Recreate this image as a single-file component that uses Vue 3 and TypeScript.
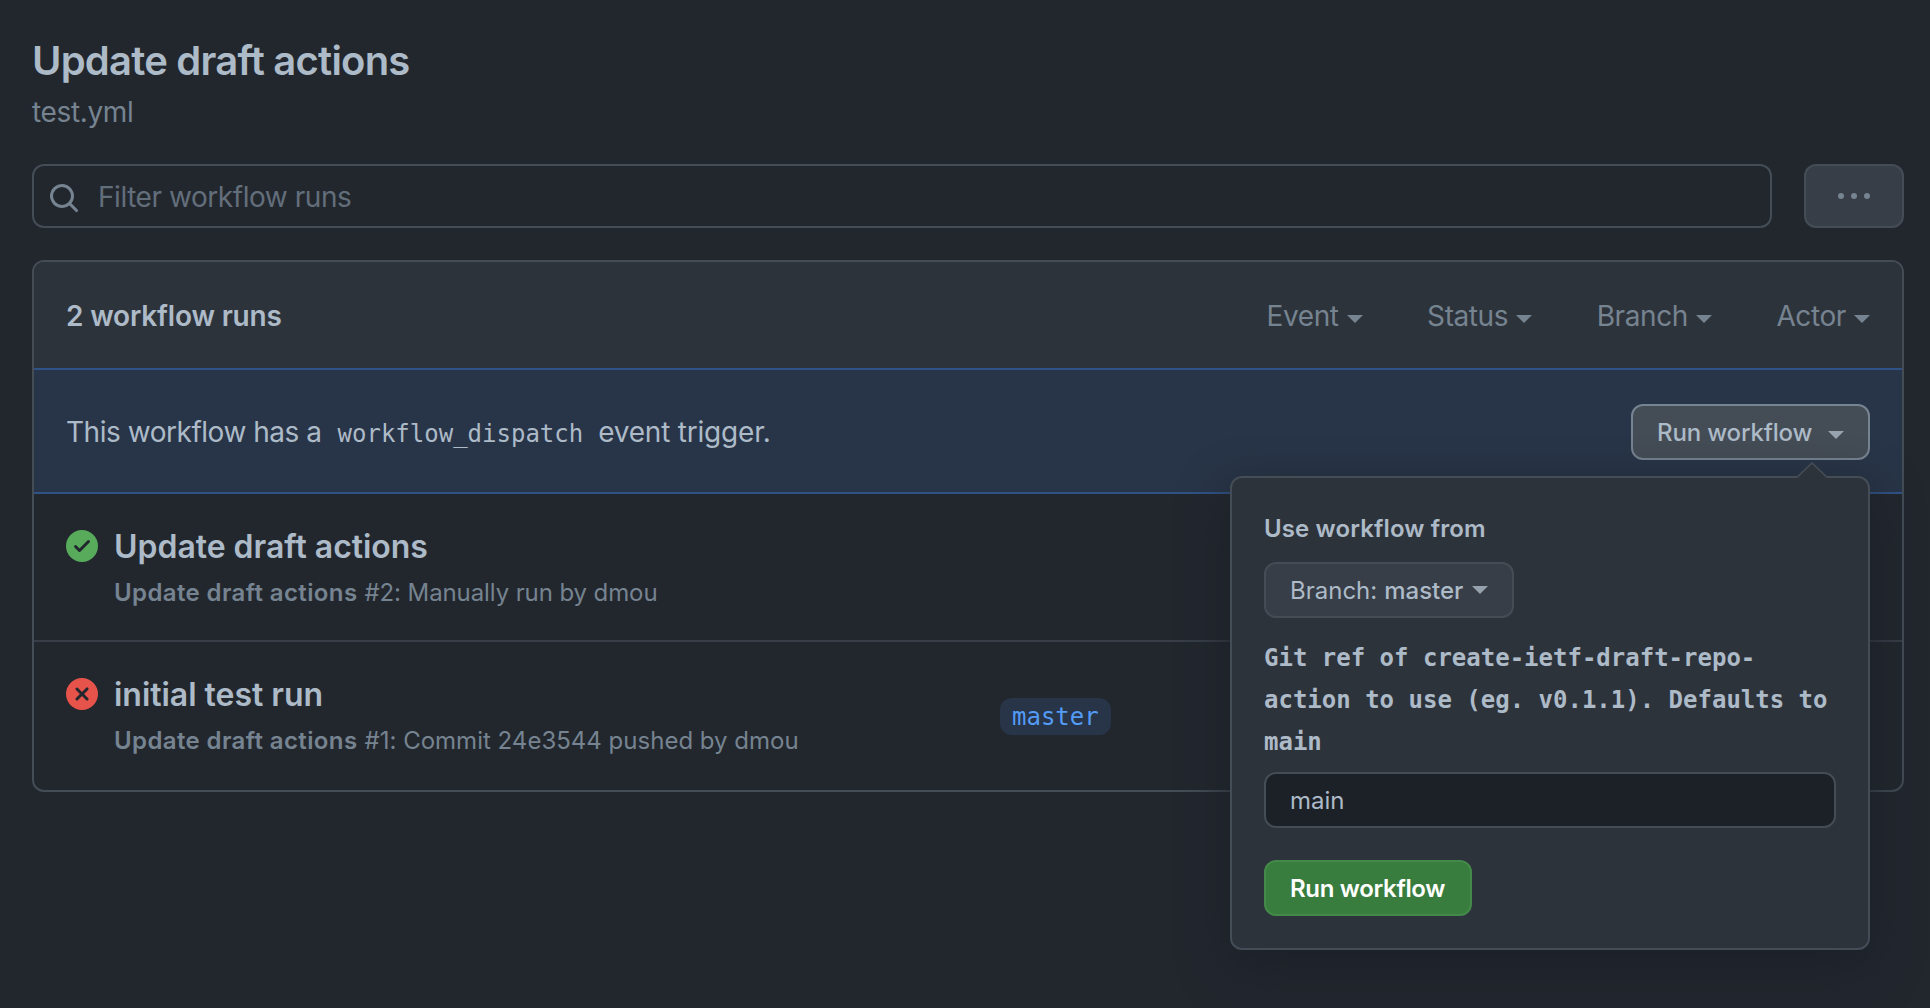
<script setup lang="ts">
import { ref } from 'vue'

interface Run {
  id: number
  ok: boolean
  title: string
  workflow: string
  detail: string
  branch?: string
}

const query = ref('')
const gitRef = ref('main')
const filters: string[] = ['Event', 'Status', 'Branch', 'Actor']
const runs: Run[] = [
  { id: 2, ok: true, title: 'Update draft actions', workflow: 'Update draft actions', detail: '#2: Manually run by dmou' },
  { id: 1, ok: false, title: 'initial test run', workflow: 'Update draft actions', detail: '#1: Commit 24e3544 pushed by dmou', branch: 'master' },
]
</script>

<template>
  <main class="page">
    <h1 class="title">Update draft actions</h1>
    <div class="file">test.yml</div>

    <div class="toolbar">
      <label class="search">
        <svg class="search-icon" viewBox="0 0 16 16" width="32" height="32">
          <path fill-rule="evenodd" d="M11.5 7a4.499 4.499 0 11-8.998 0A4.499 4.499 0 0111.5 7zm-.82 4.74a6 6 0 111.06-1.06l3.04 3.04a.75.75 0 11-1.06 1.06l-3.04-3.04z" />
        </svg>
        <input v-model="query" class="search-input" type="text" placeholder="Filter workflow runs" />
      </label>
      <button class="more" type="button" aria-label="Show options">
        <svg viewBox="0 0 16 16" width="32" height="32">
          <circle cx="1.5" cy="7.5" r="1.5" />
          <circle cx="8" cy="7.5" r="1.5" />
          <circle cx="14.5" cy="7.5" r="1.5" />
        </svg>
      </button>
    </div>

    <section class="box">
      <header class="box-header">
        <strong class="count">2 workflow runs</strong>
        <nav class="filters">
          <span v-for="f in filters" :key="f" class="filter">{{ f }}<i class="caret" /></span>
        </nav>
      </header>

      <div class="banner">
        <p class="banner-text">
          <span class="lead">This workflow has a</span>
          <code class="event">workflow_dispatch</code>
          <span class="trail">event trigger.</span>
        </p>
        <div class="dispatch">
          <button class="btn btn-open" type="button">Run workflow<i class="caret" /></button>
          <div class="popover">
            <svg class="notch" width="32" height="16" viewBox="0 0 32 16">
              <path class="notch-fill" d="M1 16L2 15L16 1L30 15L31 16Z" />
              <path class="notch-line" d="M1.5 14.8L16 1L30.5 14.8" />
            </svg>
            <div class="pop-title">Use workflow from</div>
            <button class="btn btn-branch" type="button">
              <span>Branch:</span><span class="branch-name">master</span><i class="caret" />
            </button>
            <label class="ref-label" for="git-ref">Git ref of create-ietf-draft-repo-action to use (eg. v0.1.1). Defaults to main</label>
            <input id="git-ref" v-model="gitRef" class="ref-input" type="text" />
            <button class="btn btn-primary" type="button">Run workflow</button>
          </div>
        </div>
      </div>

      <article v-for="run in runs" :key="run.id" class="row">
        <div class="row-main">
          <svg v-if="run.ok" class="state ok" viewBox="0 0 16 16" width="32" height="32">
            <path fill-rule="evenodd" d="M8 16A8 8 0 108 0a8 8 0 000 16zm3.78-9.72a.75.75 0 00-1.06-1.06L6.75 9.19 5.28 7.72a.75.75 0 00-1.06 1.06l2 2a.75.75 0 001.06 0l4.5-4.5z" />
          </svg>
          <svg v-else class="state failed" viewBox="0 0 16 16" width="32" height="32">
            <path fill-rule="evenodd" d="M2.343 13.657A8 8 0 1113.657 2.343 8 8 0 012.343 13.657zM6.03 4.97a.75.75 0 00-1.06 1.06L6.94 8 4.97 9.97a.75.75 0 101.06 1.06L8 9.06l1.97 1.97a.75.75 0 101.06-1.06L9.06 8l1.97-1.97a.75.75 0 10-1.06-1.06L8 6.94 6.03 4.97z" />
          </svg>
          <div class="row-text">
            <div class="row-title">{{ run.title }}</div>
            <div class="row-sub">
              <span class="row-workflow">{{ run.workflow }}</span>
              <span class="row-detail" :class="{ tight: !run.branch }">{{ run.detail }}</span>
            </div>
          </div>
        </div>
        <span v-if="run.branch" class="pill">{{ run.branch }}</span>
      </article>
    </section>
  </main>
</template>

<style>
body {
  background: #22272e;
}
</style>

<style scoped>
.page {
  box-sizing: border-box;
  width: 1930px;
  height: 1008px;
  padding: 30px 26px 0 32px;
  overflow: hidden;
  background: #22272e;
  color: #adbac7;
  font-family: Inter, "Liberation Sans", sans-serif;
  font-size: 28px;
  line-height: 42px;
}

.title {
  margin: 0;
  font-size: 40px;
  font-weight: 600;
  line-height: 61px;
  letter-spacing: -0.78px;
}

.file {
  color: #768390;
  letter-spacing: -0.35px;
}

.toolbar {
  display: flex;
  gap: 32px;
  margin-top: 31px;
}

.search {
  box-sizing: border-box;
  display: flex;
  flex: 1;
  align-items: center;
  height: 64px;
  padding-left: 14px;
  border: 2px solid #444c56;
  border-radius: 12px;
}

.search-icon {
  margin-top: 4px;
  fill: #768390;
}

.search-input {
  flex: 1;
  height: 42px;
  margin: 2px 0 0 18px;
  padding: 0;
  border: 0;
  outline: 0;
  background: none;
  color: #adbac7;
  font: inherit;
  letter-spacing: -0.45px;
}

.search-input::placeholder {
  color: #636e7b;
}

.more {
  box-sizing: border-box;
  width: 100px;
  height: 64px;
  padding: 0;
  border: 2px solid #444c56;
  border-radius: 12px;
  background: #373e47;
}

.more svg {
  display: block;
  margin: 2px auto 0;
  fill: #768390;
}

.box {
  margin-top: 32px;
  border: 2px solid #444c56;
  border-radius: 12px;
}

.box-header {
  box-sizing: border-box;
  display: flex;
  align-items: center;
  justify-content: space-between;
  height: 106px;
  padding: 1px 32px 0;
  border-radius: 10px 10px 0 0;
  background: #2d333b;
}

.count {
  font-weight: 600;
  letter-spacing: -0.17px;
}

.filters {
  display: flex;
  gap: 64.5px;
  color: #768390;
}

.filter {
  display: flex;
  gap: 8px;
  align-items: center;
  letter-spacing: -0.4px;
}

.caret {
  width: 0;
  height: 0;
  border: 8px solid transparent;
  border-top-color: currentColor;
  border-bottom-width: 0;
}

.filter .caret {
  margin-top: 7px;
}

.banner {
  box-sizing: border-box;
  display: flex;
  align-items: center;
  justify-content: space-between;
  height: 126px;
  padding: 2px 32px 0;
  border-top: 2px solid #305387;
  border-bottom: 2px solid #305387;
  background: #283548;
}

.banner-text {
  display: flex;
  align-items: baseline;
  margin: 2px 0 0;
}

.lead {
  letter-spacing: -0.47px;
}

.event {
  margin: 0 15px 0 16px;
  font-family: "DejaVu Sans Mono", monospace;
  font-size: 24px;
}

.trail {
  letter-spacing: -0.21px;
}

.dispatch {
  position: relative;
}

.btn {
  box-sizing: border-box;
  display: flex;
  align-items: center;
  height: 56px;
  padding: 2px 24px 0;
  border: 2px solid #444c56;
  border-radius: 12px;
  background: #373e47;
  color: #adbac7;
  font-family: inherit;
  font-size: 24px;
  font-weight: 500;
  line-height: 40px;
  letter-spacing: -0.15px;
}

.btn .caret {
  opacity: 0.8;
}

.btn-open {
  width: 239px;
  justify-content: space-between;
  border-color: #768390;
  background: #444c56;
}

.btn-open .caret {
  margin-top: 4px;
}

.popover {
  position: absolute;
  top: 72px;
  right: 0;
  z-index: 2;
  box-sizing: border-box;
  width: 640px;
  height: 474px;
  padding: 33px 32px 32px;
  border: 2px solid #444c56;
  border-radius: 12px;
  background: #2d333b;
  box-shadow: 0 16px 48px #1c2128;
}

.notch {
  position: absolute;
  top: -16px;
  right: 40px;
}

.notch-fill {
  fill: #2d333b;
}

.notch-line {
  fill: none;
  stroke: #444c56;
  stroke-width: 1.6;
}

.pop-title {
  font-size: 24px;
  font-weight: 600;
  line-height: 36px;
  letter-spacing: 0.13px;
}

.btn-branch {
  width: 250px;
  margin-top: 15px;
  font-weight: 400;
  letter-spacing: 0;
}

.btn-branch .caret {
  margin-bottom: 2px;
}

.branch-name {
  margin: 0 9px 0 7px;
  font-weight: 500;
}

.ref-label {
  display: block;
  margin-top: 19px;
  font-family: "DejaVu Sans Mono", monospace;
  font-size: 24px;
  font-weight: 700;
  line-height: 42px;
}

.ref-input {
  box-sizing: border-box;
  display: block;
  width: 572px;
  height: 56px;
  margin-top: 9px;
  padding: 0 24px;
  border: 2px solid #444c56;
  border-radius: 12px;
  outline: 0;
  background: #1c2128;
  color: #adbac7;
  font-family: inherit;
  font-size: 24px;
}

.btn-primary {
  width: 208px;
  margin-top: 32px;
  border-color: #43894a;
  background: #387d3d;
  color: #fff;
  font-weight: 600;
  letter-spacing: -0.33px;
}

.row {
  box-sizing: border-box;
  display: flex;
  align-items: flex-start;
  height: 146px;
  padding: 28px 32px 0;
}

.row + .row {
  border-top: 2px solid #373e47;
  height: 150px;
}

.row-main {
  display: flex;
  gap: 16px;
  width: 934px;
}

.state {
  flex: none;
  margin-top: 8px;
}

.ok {
  fill: #57ab5a;
}

.failed {
  fill: #e5534b;
}

.row-text {
  margin-top: 1px;
}

.row-title {
  font-size: 32px;
  font-weight: 600;
  line-height: 48px;
  letter-spacing: -0.03px;
}

.row-sub {
  display: flex;
  gap: 7px;
  margin-top: 4px;
  color: #768390;
  font-size: 24px;
  line-height: 36px;
}

.row-workflow {
  font-weight: 600;
  letter-spacing: 0.38px;
}

.row-detail {
  letter-spacing: 0.01px;
}

.row-detail.tight {
  letter-spacing: -0.1px;
}

.pill {
  margin-top: 28px;
  padding: 2px 12px 0;
  border-radius: 12px;
  background: #283548;
  color: #539bf5;
  font-family: "DejaVu Sans Mono", monospace;
  font-size: 24px;
  line-height: 35px;
}
</style>
